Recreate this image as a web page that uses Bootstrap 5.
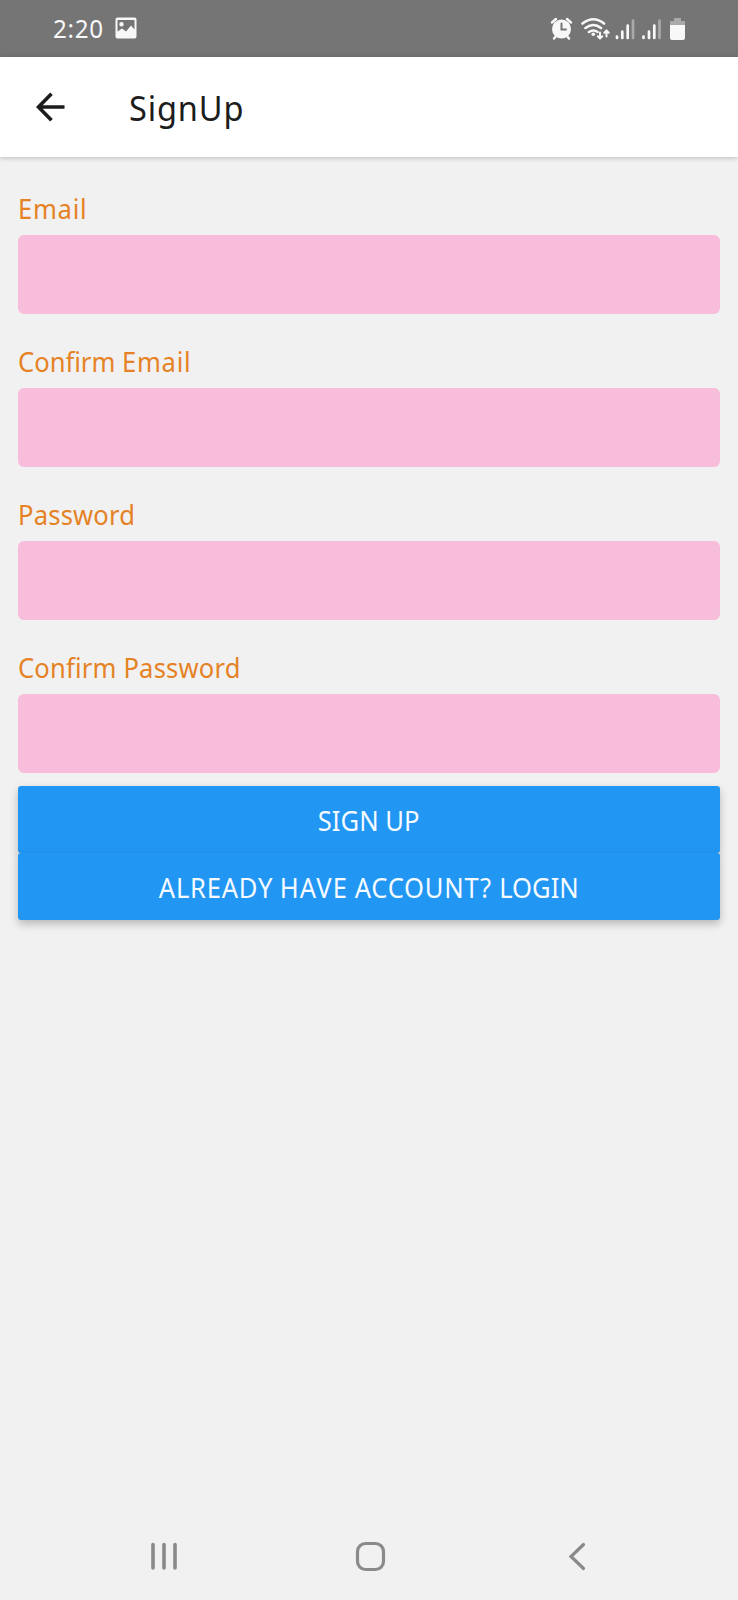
<!DOCTYPE html>
<html lang="en">
<head>
<meta charset="utf-8">
<meta name="viewport" content="width=device-width, initial-scale=1">
<title>SignUp</title>
<link href="https://cdn.jsdelivr.net/npm/bootstrap@5.3.0/dist/css/bootstrap.min.css" rel="stylesheet">
<style>
  body { background: #f1f1f1; font-family: "Noto Sans", sans-serif; }
  .status-bar { height: 57px; background: #757575; color: #f8f8f8; padding: 0 52px 0 53px; font-size: 26px; }
  .status-bar svg, .app-header svg, .nav-keys svg { display: block; flex: none; }
  .photo-icon { margin-left: 7px; margin-top: -2px; }
  .clock-text { letter-spacing: .8px; }
  .app-header { height: 100px; background: #fff; padding-left: 30px; color: #1c1c1c; box-shadow: 0 1px 5px rgba(0,0,0,.22); }
  .app-title { font-size: 35px; line-height: 48px; font-weight: 400; letter-spacing: .9px; margin: 1px 0 0 59px; }
  .signup-form { padding: 33px 18px 0; }
  .field-group { margin-bottom: 29px; }
  .field-group:last-of-type { margin-bottom: 13px; }
  .form-label { display: block; font-size: 27.5px; line-height: 38px; margin-bottom: 7px; color: #e58225; }
  .form-control, .form-control:focus { height: 79px; background: #f8bdda; border: 0; border-radius: 6px; box-shadow: none; }
  .btn-material { height: 67px; padding: 0; border: 0; border-radius: 3px; background: #2196f3; color: #f4faff; font-size: 27.5px; line-height: 70px; box-shadow: 0 4px 9px rgba(0,0,0,.24); }
  .btn-material:hover { background: #2196f3; color: #f4faff; }
  .fit-text { display: inline-block; transform-origin: 0 50%; white-space: nowrap; transform: scaleX(.93); }
  .btn-material .fit-text { transform-origin: 50% 50%; }
  .track-sm { letter-spacing: .2px; }
  .track-lg { letter-spacing: .8px; }
  .track-xl { letter-spacing: 1.2px; }
  .nav-keys { height: 88px; padding: 0 147px; color: #8a8a8a; }
</style>
</head>
<body>
<div class="d-flex flex-column vh-100 overflow-hidden">
  <div class="status-bar d-flex align-items-center justify-content-between">
    <div class="d-flex align-items-center">
      <span class="fit-text clock-text">2:20</span>
      <svg class="photo-icon" width="22" height="22" viewBox="0 0 22 22"><path fill="currentColor" fill-rule="evenodd" d="M2.500.5h17a2 2 0 0 1 2 2v17a2 2 0 0 1-2 2h-17a2 2 0 0 1-2-2v-17a2 2 0 0 1 2-2ZM2.500 14.500l4.500-3 4 3 5-6 3.500 4V3h-17ZM6.500 5a2.200 2.200 0 1 0 0 4.400 2.200 2.200 0 0 0 0-4.400Z"/></svg>
    </div>
    <svg width="136" height="26" viewBox="550 15 136 26" fill="none" stroke="currentColor" stroke-linecap="round">
      <circle cx="561.500" cy="28" r="9.500" fill="currentColor" stroke="none"/>
      <path stroke-width="2.500" d="M552 21.500l4-3.500M571 21.500l-4-3.500M556 35l-2 2.500M567 35l2 2.500"/>
      <path stroke="#757575" stroke-width="2" d="M561.500 22.500v6h4.500"/>
      <path stroke-width="2.600" d="M582.500 22.500q11-8.500 21.500 0M585.500 27q8-6 15.500 0M589 31q4.500-3 8.500 0"/>
      <circle cx="593.300" cy="33.300" r="1.800" fill="currentColor" stroke="none"/>
      <path stroke-width="2" stroke-linejoin="round" d="M600 31.500v6M597.800 35.300l2.200 2.300 2.200-2.300M606.500 35.500v-6M604.300 31.800l2.200-2.300 2.200 2.300"/>
      <g stroke-width="2.700"><path d="M617 35.500v1.500M622.300 30.500v6.500M627.700 24.500V37M643.500 35.500v1.500M649 30.500v6.500M654.300 24.500V37"/><path opacity=".4" d="M633 19.500V37M659.500 19.500V37"/></g>
      <g stroke="none" fill="currentColor"><path opacity=".4" d="M674 17h7v3h4v4h-15v-4h4z"/><path d="M670 24h15v13q0 2-2 2h-11q-2 0-2-2z"/></g>
    </svg>
  </div>

  <header class="app-header d-flex align-items-center">
    <svg width="40" height="40" viewBox="30 87 40 40" fill="none" stroke="currentColor" stroke-width="3.600"><path d="M64.500 107H39M51.500 93.700L38.500 107l13 13.300"/></svg>
    <h1 class="app-title"><span class="fit-text">SignUp</span></h1>
  </header>

  <form class="signup-form flex-grow-1">
    <div class="field-group"><label class="form-label" for="email"><span class="fit-text track-lg">Email</span></label><input class="form-control" id="email" type="email"></div>
    <div class="field-group"><label class="form-label" for="email2"><span class="fit-text">Confirm <span class="track-lg">Email</span></span></label><input class="form-control" id="email2" type="email"></div>
    <div class="field-group"><label class="form-label" for="pass"><span class="fit-text track-sm">Password</span></label><input class="form-control" id="pass" type="password"></div>
    <div class="field-group"><label class="form-label" for="pass2"><span class="fit-text track-sm">Confirm Password</span></label><input class="form-control" id="pass2" type="password"></div>
    <button type="button" class="btn btn-material d-block w-100"><span class="fit-text">SIGN UP</span></button>
    <button type="button" class="btn btn-material d-block w-100"><span class="fit-text"><span class="track-lg">ALREADY</span> <span class="track-xl">HAVE</span> <span class="track-lg">ACCOUNT? </span>LOGIN</span></button>
  </form>

  <nav class="nav-keys d-flex align-items-center justify-content-between">
    <svg width="34" height="34" viewBox="147 1539 34 34" stroke="currentColor" stroke-width="3.600" stroke-linecap="round"><path d="M153 1544.500v23.500M164 1544.500v23.500M175 1544.500v23.500"/></svg>
    <svg width="34" height="34" viewBox="352 1539 34 34" fill="none" stroke="currentColor" stroke-width="3.200"><rect x="357.500" y="1543.500" width="26" height="26" rx="8"/></svg>
    <svg width="34" height="34" viewBox="557 1539 34 34" fill="none" stroke="currentColor" stroke-width="3.200" stroke-linecap="round"><path d="M583.500 1544.500L571 1556.500l12.500 12"/></svg>
  </nav>
</div>
<script src="https://cdn.jsdelivr.net/npm/bootstrap@5.3.0/dist/js/bootstrap.bundle.min.js"></script>
</body>
</html>
